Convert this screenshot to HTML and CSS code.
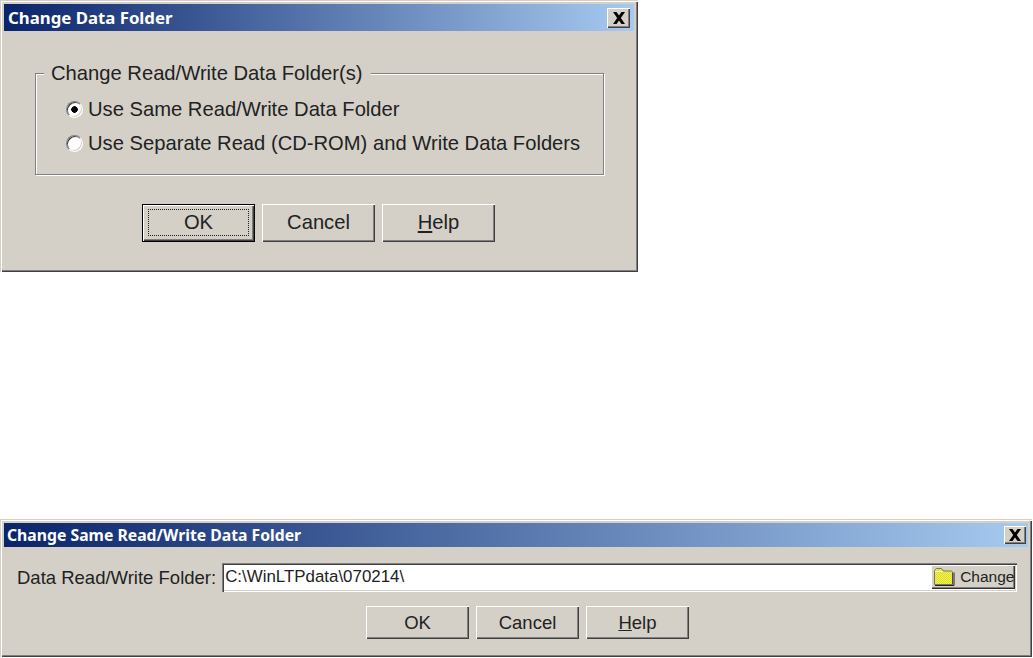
FILE: index.html
```html
<!DOCTYPE html>
<html>

<head>
    <title>Change Data Folder</title>
    <link rel="stylesheet" href="styles.css">
</head>

<body>
    <div class="dialog dialog-one">
        <div class="titlebar">
            <span>Change Data Folder</span>
            <button class="close">
                <svg width="14" height="12" viewBox="0 0 14 12"><path d="M1 0h3.500L7 3.500 9.500 0H13L8.800 6 13 12H9.500L7 8.500 4.500 12H1l4.200-6z" fill="#000"/></svg>
            </button>
        </div>
        <fieldset class="group">
            <legend>Change Read/Write Data Folder(s)</legend>
            <label class="option"><input type="radio" name="mode" checked>Use Same Read/Write Data Folder</label>
            <label class="option"><input type="radio" name="mode">Use Separate Read (CD-ROM) and Write Data Folders</label>
        </fieldset>
        <div class="buttons buttons-one">
            <button class="btn btn-default"><span class="focus">OK</span></button>
            <button class="btn">Cancel</button>
            <button class="btn"><span><u>H</u>elp</span></button>
        </div>
    </div>

    <div class="dialog dialog-two">
        <div class="titlebar">
            <span>Change Same Read/Write Data Folder</span>
            <button class="close">
                <svg width="14" height="12" viewBox="0 0 14 12"><path d="M1 0h3.500L7 3.500 9.500 0H13L8.800 6 13 12H9.500L7 8.500 4.500 12H1l4.200-6z" fill="#000"/></svg>
            </button>
        </div>
        <div class="folder-row">
            <label class="folder-label">Data Read/Write Folder:</label>
            <div class="folder-input">
                <span class="folder-path">C:\WinLTPdata\070214\</span>
                <button class="change">
                    <svg width="21" height="18" viewBox="0 0 21 18">
                        <defs>
                            <pattern id="dither" width="2" height="2" patternUnits="userSpaceOnUse">
                                <rect width="2" height="2" fill="#f4f438"/>
                                <rect width="1" height="1" fill="#d8d848"/>
                                <rect x="1" y="1" width="1" height="1" fill="#d8d848"/>
                            </pattern>
                        </defs>
                        <path d="M.5 16.500V2.500l2-2h5l2 2.500h8l1 1v12.500z" fill="url(#dither)" stroke="#77775a"/>
                        <path d="M1.500 3.500h7" stroke="#f4f4d8"/>
                        <path d="M1 17.500h19v-13" fill="none" stroke="#202020"/>
                        <path d="M18.500 5v11.500" stroke="#505040"/>
                    </svg>
                    Change
                </button>
            </div>
        </div>
        <div class="buttons buttons-two">
            <button class="btn">OK</button>
            <button class="btn">Cancel</button>
            <button class="btn"><span><u>H</u>elp</span></button>
        </div>
    </div>
</body>

</html>
```

FILE: styles.css
```css
body {
    margin: 0px;
    background-color: white;
    font-family: 'Liberation Sans', Arial, sans-serif;
    font-size: 18.500px;
    color: #222;
}

.dialog {
    box-sizing: border-box;
    padding: 4px;
    background-color: #d4d0c8;
    box-shadow: inset 1px 1px 0 #d4d0c8, inset 2px 2px 0 white, inset -1px -1px 0 #404040, inset -2px -2px 0 #808080;
}

.dialog-one {
    width: 638px;
    height: 272px;
    margin-bottom: 247px;
    font-size: 20.200px;
}

.dialog-two {
    width: 1032px;
    height: 138px;
}

.titlebar {
    display: flex;
    align-items: center;
    justify-content: space-between;
    height: 27px;
    padding-left: 4px;
    padding-right: 4px;
    background: linear-gradient(to right, #0a246a, #a6caf0);
    color: white;
    font-family: 'Noto Sans', sans-serif;
    font-size: 16.800px;
    font-weight: bold;
}

.dialog-two .titlebar {
    height: 24px;
    padding-left: 3px;
    padding-right: 2px;
    font-size: 15.750px;
}

.close {
    display: flex;
    align-items: center;
    justify-content: center;
    width: 23px;
    height: 20px;
    padding: 0;
    border: 0;
    background-color: #d4d0c8;
    box-shadow: inset 1px 1px 0 white, inset -1px -1px 0 #404040, inset -2px -2px 0 #808080;
}

.dialog-two .close {
    width: 22px;
    height: 18px;
}

.group {
    box-sizing: border-box;
    width: 569px;
    height: 113px;
    margin: 31px 0 0 31px;
    padding: 8px 0 0 8px;
    border: 1px solid #808080;
    box-shadow: 1px 1px 0 white, inset 1px 1px 0 white;
}

.group legend {
    padding: 0 8px 0 7px;
    line-height: 22px;
    background-color: #d4d0c8;
}

.option {
    display: flex;
    align-items: center;
    height: 34px;
    padding-left: 22px;
}

.option input {
    appearance: none;
    width: 17px;
    height: 17px;
    margin: 0 5px 0 0;
    border: 1px solid;
    border-color: #808080 white white #808080;
    border-radius: 50%;
    background-color: white;
    box-shadow: inset 1px 1px 0 #404040, inset -1px -1px 0 #d4d0c8;
}

.option input:checked {
    background: radial-gradient(circle, black 3px, white 3.500px);
}

.buttons {
    display: flex;
    gap: 7px;
}

.buttons-one {
    margin: 29px 0 0 138px;
}

.buttons-two {
    margin: 14px 0 0 362px;
}

.btn {
    box-sizing: border-box;
    width: 113px;
    height: 38px;
    padding: 0 0 2px 0;
    border: 0;
    background-color: #d4d0c8;
    color: #222;
    font-family: inherit;
    font-size: inherit;
    box-shadow: inset 1px 1px 0 white, inset -1px -1px 0 #404040, inset -2px -2px 0 #808080;
}

.dialog-two .btn {
    width: 103px;
    height: 33px;
    padding: 0;
}

.btn-default {
    padding: 4px 5px 5px 5px;
    border: 1px solid black;
}

.focus {
    display: block;
    height: 100%;
    line-height: 25px;
    border: 1px dotted #222;
    box-sizing: border-box;
}

.folder-row {
    display: flex;
    align-items: center;
    height: 29px;
    margin: 16px 0 0 13px;
}

.folder-label {
    margin-right: 6px;
}

.folder-input {
    box-sizing: border-box;
    display: flex;
    align-items: center;
    justify-content: space-between;
    width: 795px;
    height: 29px;
    padding: 2px 2px 3px 3px;
    background-color: white;
    box-shadow: inset 1px 1px 0 #808080, inset 2px 2px 0 #404040, inset -1px -1px 0 white, inset -2px -2px 0 #d4d0c8;
    font-size: 16.900px;
}

.change {
    display: flex;
    align-items: center;
    gap: 5px;
    box-sizing: border-box;
    width: 84px;
    height: 24px;
    padding: 0 0 0 3px;
    border: 0;
    background-color: #d4d0c8;
    color: #222;
    font-family: inherit;
    font-size: 15.500px;
    box-shadow: inset 1px 1px 0 white, inset -1px -1px 0 #303030, inset -2px -2px 0 #808080;
}
```
